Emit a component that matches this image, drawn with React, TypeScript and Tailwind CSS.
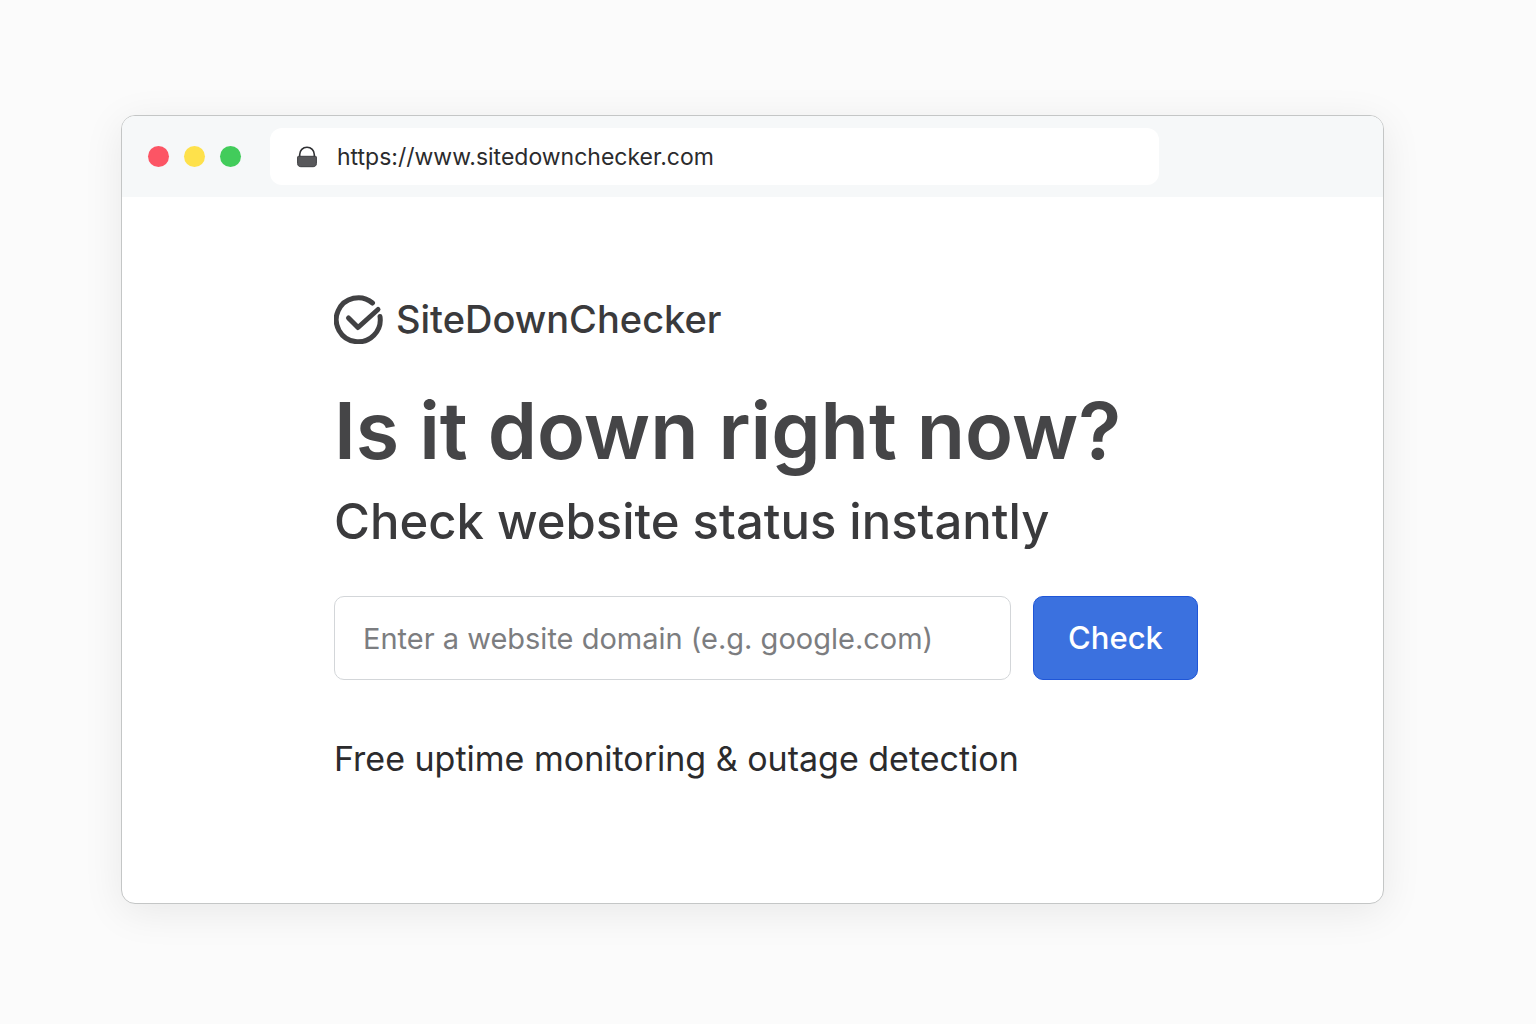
import { useState } from "react";

const trafficLights = [
  { label: "Close", color: "bg-[#fc5565]" },
  { label: "Minimize", color: "bg-[#fee14b]" },
  { label: "Maximize", color: "bg-[#42cc5b]" },
];

function LockIcon() {
  return (
    <svg width="20" height="22" viewBox="0 0 20 22" fill="none" aria-hidden>
      <path d="M2.7 11V8.6C2.7 4.4 5.8 1.3 10 1.3s7.3 3.1 7.3 7.3V11" stroke="#303134" strokeWidth="1.6" />
      <path
        d="M1.5 10.3h17c.5 0 .9.3.9.8v6.4c0 2-1.2 3.2-3.2 3.2H3.8c-2 0-3.2-1.2-3.2-3.2v-6.4c0-.5.4-.8.9-.8z"
        fill="#58585b"
        stroke="#3d3e41"
      />
    </svg>
  );
}

function LogoMark() {
  return (
    <svg
      width="50"
      height="50"
      viewBox="0 0 50 50"
      fill="none"
      stroke="#414143"
      strokeWidth="5"
      strokeLinecap="round"
      strokeLinejoin="round"
      aria-hidden
    >
      <path d="M38.5 9A22 22 0 1 0 46 22.500" />
      <path d="M14.500 24l9.500 9.500 20-18" />
    </svg>
  );
}

function BrowserBar() {
  return (
    <header className="flex items-center bg-[#f6f8f9] py-3 pl-[26px]">
      <div className="flex gap-[15px]">
        {trafficLights.map((light) => (
          <button
            key={light.label}
            type="button"
            aria-label={light.label}
            className={`size-[21px] rounded-full ${light.color}`}
          />
        ))}
      </div>
      <div className="ml-[29px] flex h-[57px] w-[72%] items-center gap-5 rounded-xl bg-white px-[27px]">
        <LockIcon />
        <span className="pt-0.5 text-[23px] text-[#2b2b2d]">https://www.sitedownchecker.com</span>
      </div>
    </header>
  );
}

export default function App() {
  const [domain, setDomain] = useState("");

  return (
    <div className="min-h-screen bg-[#fbfbfb] pt-[115px] pr-[152px] pb-[120px] pl-[121px] font-['Inter',sans-serif]">
      <div className="overflow-hidden rounded-[14px] border border-[#c4c6c6] bg-white shadow-[0_8px_40px_rgba(0,0,0,0.08)]">
        <BrowserBar />
        <main className="pt-[97px] pr-[185px] pb-[120px] pl-[212px]">
          <div className="flex items-center gap-3">
            <LogoMark />
            <span className="text-[38px] leading-[50px] font-medium text-[#3a3a3c]">SiteDownChecker</span>
          </div>
          <h1 className="mt-9 text-[79px] leading-[100px] font-semibold text-[#454547]">Is it down right now?</h1>
          <p className="mt-2.5 text-[49px] leading-[64px] font-[450] text-[#3a3a3c]">Check website status instantly</p>
          <form className="mt-[42px] flex gap-[22px]" onSubmit={(e) => e.preventDefault()}>
            <input
              type="text"
              aria-label="Website domain"
              value={domain}
              onChange={(e) => setDomain(e.target.value)}
              placeholder="Enter a website domain (e.g. google.com)"
              className="h-[84px] min-w-0 flex-1 rounded-[10px] border border-[#d3d6d9] bg-white px-7 text-[29px] text-[#3a3a3c] placeholder:text-[#7c7d80]"
            />
            <button
              type="submit"
              className="h-[84px] w-[165px] rounded-[10px] border border-[#1f56d8] bg-[#3b71df] text-[31px] font-medium text-white"
            >
              Check
            </button>
          </form>
          <p className="mt-[55px] text-[34px] leading-[48px] text-[#2b2b2d]">
            Free uptime monitoring &amp; outage detection
          </p>
        </main>
      </div>
    </div>
  );
}
